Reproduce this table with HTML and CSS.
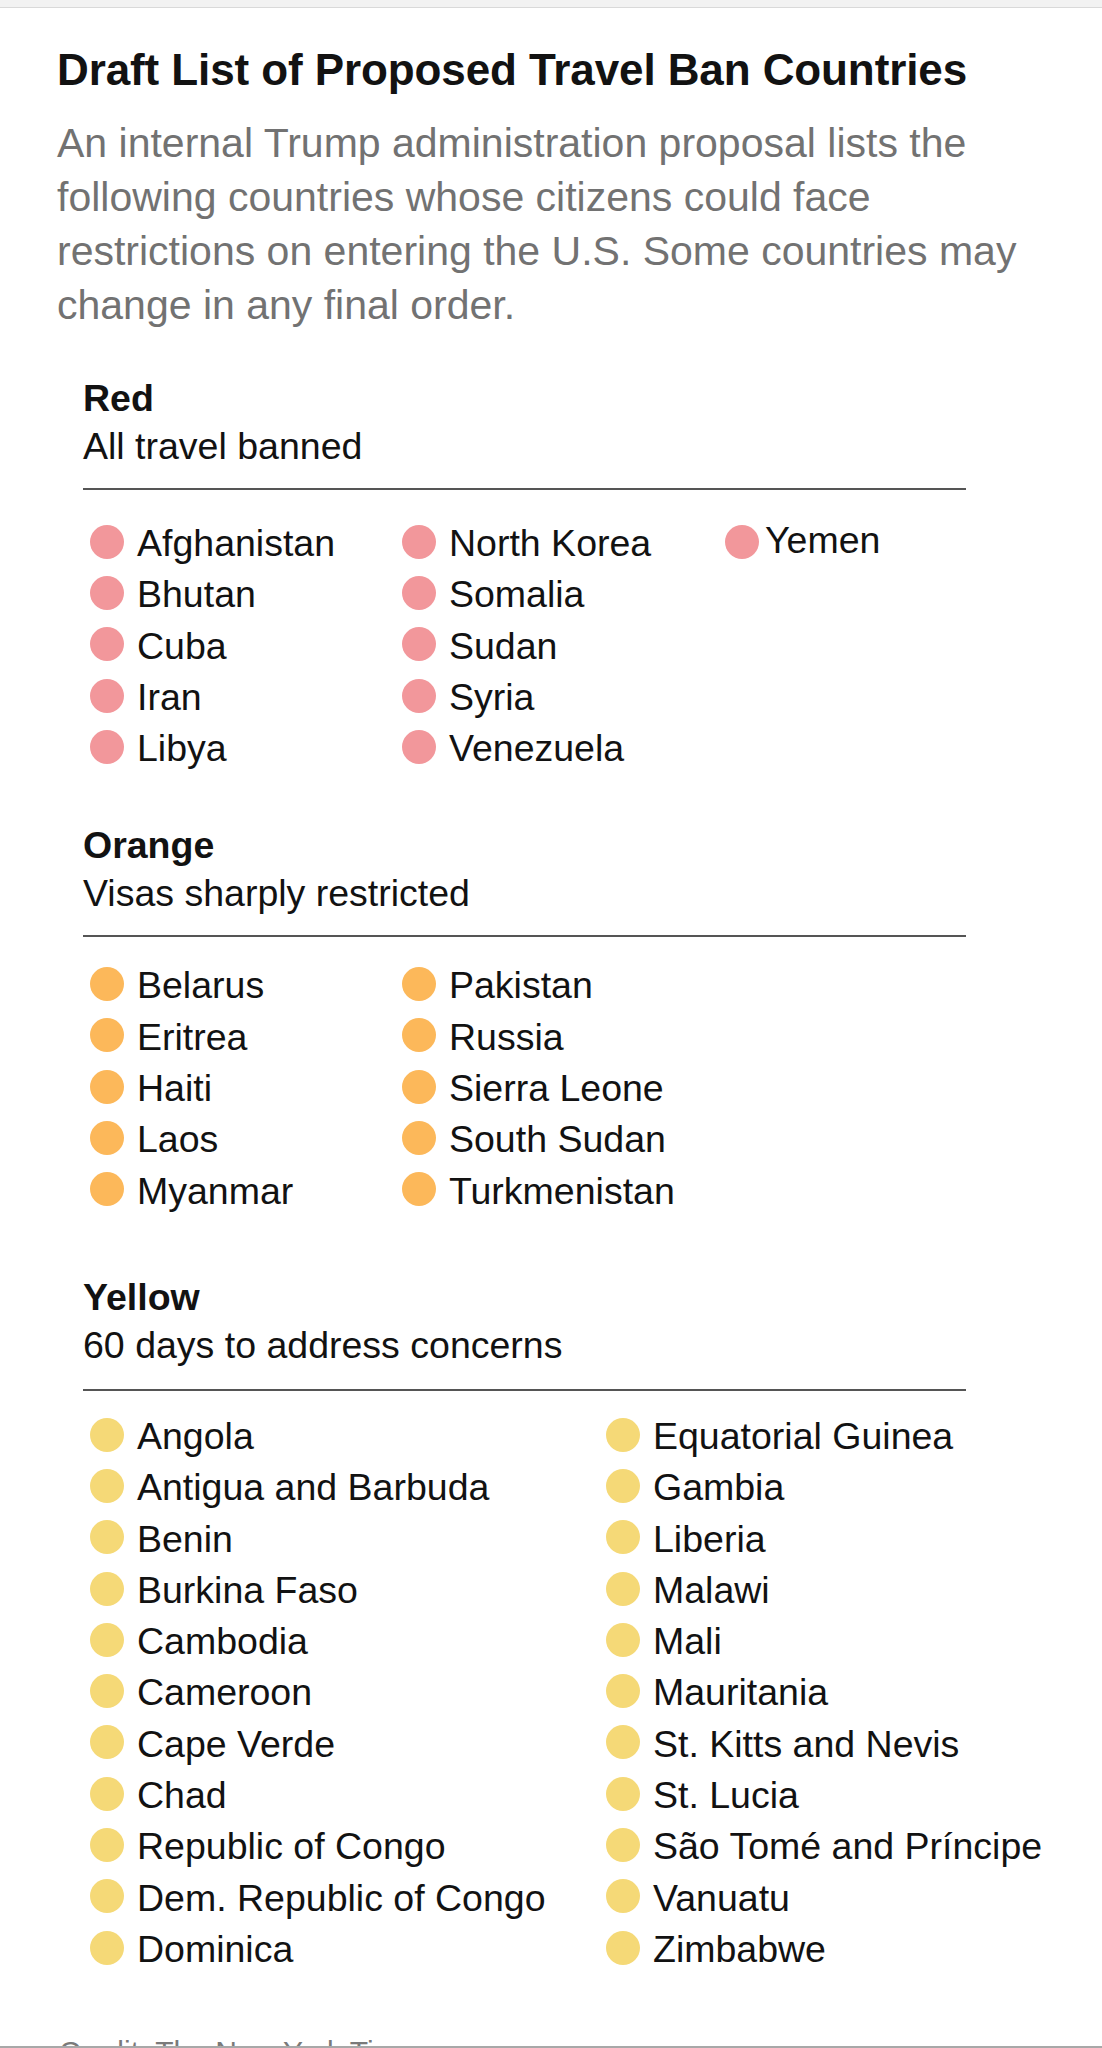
FILE: index.html
```html
<!DOCTYPE html>
<html lang="en">
<head>
<meta charset="utf-8">
<title>Draft List of Proposed Travel Ban Countries</title>
<link rel="stylesheet" href="styles.css">
</head>
<body>
<div class="topbar"></div>
<main class="graphic">
  <h1 class="headline">Draft List of Proposed Travel Ban Countries</h1>
  <p class="leadin">An internal Trump administration proposal lists the following countries whose citizens could face restrictions on entering the U.S. Some countries may change in any final order.</p>

  <section class="group group-red">
    <h2 class="group-title">Red</h2>
    <p class="group-desc">All travel banned</p>
    <ul class="countries rows-5 cols-3">
      <li class="country"><span class="dot"></span><span class="name">Afghanistan</span></li>
      <li class="country"><span class="dot"></span><span class="name">Bhutan</span></li>
      <li class="country"><span class="dot"></span><span class="name">Cuba</span></li>
      <li class="country"><span class="dot"></span><span class="name">Iran</span></li>
      <li class="country"><span class="dot"></span><span class="name">Libya</span></li>
      <li class="country"><span class="dot"></span><span class="name">North Korea</span></li>
      <li class="country"><span class="dot"></span><span class="name">Somalia</span></li>
      <li class="country"><span class="dot"></span><span class="name">Sudan</span></li>
      <li class="country"><span class="dot"></span><span class="name">Syria</span></li>
      <li class="country"><span class="dot"></span><span class="name">Venezuela</span></li>
      <li class="country tight"><span class="dot"></span><span class="name">Yemen</span></li>
    </ul>
  </section>

  <section class="group group-orange">
    <h2 class="group-title">Orange</h2>
    <p class="group-desc">Visas sharply restricted</p>
    <ul class="countries rows-5 cols-3">
      <li class="country"><span class="dot"></span><span class="name">Belarus</span></li>
      <li class="country"><span class="dot"></span><span class="name">Eritrea</span></li>
      <li class="country"><span class="dot"></span><span class="name">Haiti</span></li>
      <li class="country"><span class="dot"></span><span class="name">Laos</span></li>
      <li class="country"><span class="dot"></span><span class="name">Myanmar</span></li>
      <li class="country"><span class="dot"></span><span class="name">Pakistan</span></li>
      <li class="country"><span class="dot"></span><span class="name">Russia</span></li>
      <li class="country"><span class="dot"></span><span class="name">Sierra Leone</span></li>
      <li class="country"><span class="dot"></span><span class="name">South Sudan</span></li>
      <li class="country"><span class="dot"></span><span class="name">Turkmenistan</span></li>
    </ul>
  </section>

  <section class="group group-yellow">
    <h2 class="group-title">Yellow</h2>
    <p class="group-desc">60 days to address concerns</p>
    <ul class="countries rows-11 cols-2">
      <li class="country"><span class="dot"></span><span class="name">Angola</span></li>
      <li class="country"><span class="dot"></span><span class="name">Antigua and Barbuda</span></li>
      <li class="country"><span class="dot"></span><span class="name">Benin</span></li>
      <li class="country"><span class="dot"></span><span class="name">Burkina Faso</span></li>
      <li class="country"><span class="dot"></span><span class="name">Cambodia</span></li>
      <li class="country"><span class="dot"></span><span class="name">Cameroon</span></li>
      <li class="country"><span class="dot"></span><span class="name">Cape Verde</span></li>
      <li class="country"><span class="dot"></span><span class="name">Chad</span></li>
      <li class="country"><span class="dot"></span><span class="name">Republic of Congo</span></li>
      <li class="country"><span class="dot"></span><span class="name">Dem. Republic of Congo</span></li>
      <li class="country"><span class="dot"></span><span class="name">Dominica</span></li>
      <li class="country"><span class="dot"></span><span class="name">Equatorial Guinea</span></li>
      <li class="country"><span class="dot"></span><span class="name">Gambia</span></li>
      <li class="country"><span class="dot"></span><span class="name">Liberia</span></li>
      <li class="country"><span class="dot"></span><span class="name">Malawi</span></li>
      <li class="country"><span class="dot"></span><span class="name">Mali</span></li>
      <li class="country"><span class="dot"></span><span class="name">Mauritania</span></li>
      <li class="country"><span class="dot"></span><span class="name">St. Kitts and Nevis</span></li>
      <li class="country"><span class="dot"></span><span class="name">St. Lucia</span></li>
      <li class="country"><span class="dot"></span><span class="name">São Tomé and Príncipe</span></li>
      <li class="country"><span class="dot"></span><span class="name">Vanuatu</span></li>
      <li class="country"><span class="dot"></span><span class="name">Zimbabwe</span></li>
    </ul>
  </section>

  <p class="credit">Credit: The New York Times</p>
</main>
<div class="bottom-edge"></div>
</body>
</html>
```

FILE: styles.css
```css
html, body {
  margin: 0;
  padding: 0;
  background: #ffffff;
}

body {
  font-family: "Liberation Sans", Arial, sans-serif;
  color: #121212;
  width: 1102px;
}

.topbar {
  height: 7px;
  background: #f2f2f2;
  border-bottom: 1px solid #d9d9d9;
}

.graphic {
  padding-left: 57px;
}

.headline {
  margin: 36px 0 0;
  font-size: 44px;
  line-height: 52px;
  font-weight: 700;
  color: #121212;
  letter-spacing: -0.1px;
}

.leadin {
  margin: 20px 0 0;
  width: 980px;
  font-size: 41px;
  line-height: 54px;
  color: #727272;
}

.group {
  margin-left: 26px;
  width: 883px;
}

.group-red {
  margin-top: 42px;
  margin-bottom: 47px;
}

.group-orange {
  margin-bottom: 56px;
}

.group-title {
  margin: 0;
  font-size: 37.5px;
  line-height: 48px;
  font-weight: 700;
}

.group-desc {
  margin: 0;
  font-size: 37.5px;
  line-height: 48px;
  padding-bottom: 18px;
  border-bottom: 2px solid #555555;
}

.group-yellow .group-desc {
  padding-bottom: 20px;
}

.countries {
  list-style: none;
  margin: 0;
  padding: 23px 0 0 7px;
  display: grid;
  grid-auto-flow: column;
}

.group-red .countries {
  padding-top: 28px;
}

.group-yellow .countries {
  padding-top: 20px;
}

.rows-5 {
  grid-template-rows: repeat(5, 51.3px);
}

.rows-11 {
  grid-template-rows: repeat(11, 51.3px);
}

.cols-3 {
  grid-template-columns: 312px 323px 1fr;
}

.cols-2 {
  grid-template-columns: 516px 1fr;
}

.country {
  display: flex;
  align-items: center;
  font-size: 37.5px;
  line-height: 51.3px;
  white-space: nowrap;
}

.dot {
  flex: none;
  width: 34px;
  height: 34px;
  border-radius: 50%;
  margin-right: 13px;
  margin-bottom: 4px;
}

.group-red .dot {
  background: #f2979b;
}

.group-orange .dot {
  background: #fcb85a;
}

.group-yellow .dot {
  background: #f5d977;
}

.country.tight .dot {
  margin-right: 6px;
}

.country.tight .name {
  margin-bottom: 6px;
}

.credit {
  margin: 59px 0 0 2px;
  font-size: 30px;
  line-height: 36px;
  color: #7a7a7a;
}

.bottom-edge {
  position: fixed;
  left: 0;
  right: 0;
  bottom: 0;
  height: 2px;
  background: #a8a8a8;
}
```
